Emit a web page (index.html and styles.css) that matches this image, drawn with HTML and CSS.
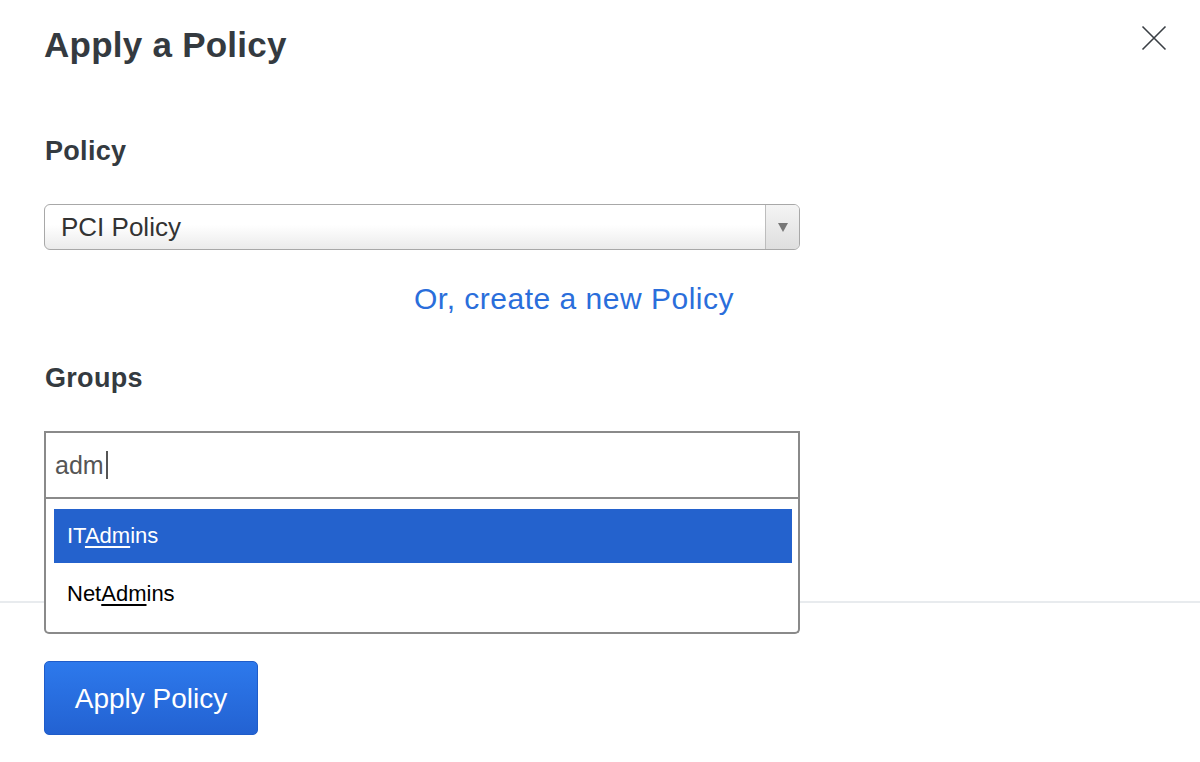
FILE: index.html
```html
<!DOCTYPE html>
<html lang="en">
<head>
<meta charset="utf-8">
<title>Apply a Policy</title>
<link rel="stylesheet" href="styles.css">
</head>
<body>
<div class="modal">
  <div class="modal-header">
    <h1 class="title">Apply a Policy</h1>
    <button class="close" aria-label="Close">
      <svg width="26" height="26" viewBox="0 0 26 26"><path d="M1.5 1.5 L24.5 24.5 M24.5 1.5 L1.5 24.5" stroke="#3a3f44" stroke-width="1.6" fill="none"/></svg>
    </button>
  </div>
  <div class="modal-body">
    <div class="label label-policy">Policy</div>
    <div class="select">
      <span class="select-value">PCI Policy</span>
      <span class="select-arrow"><span class="triangle"></span></span>
    </div>
    <div class="link-row"><a class="link" href="#">Or, create a new Policy</a></div>
    <div class="label label-groups">Groups</div>
    <div class="combo">
      <div class="combo-input"><span class="typed">adm</span><span class="caret"></span></div>
      <ul class="dropdown">
        <li class="option active">IT<u>Adm</u>ins</li>
        <li class="option">Net<u>Adm</u>ins</li>
      </ul>
    </div>
  </div>
  <div class="modal-footer">
    <button class="apply">Apply Policy</button>
  </div>
</div>
</body>
</html>
```
FILE: styles.css
```css
html, body {
  margin: 0;
  padding: 0;
  background: #ffffff;
}
body {
  font-family: "Liberation Sans", Arial, sans-serif;
  color: #343a40;
}
.modal {
  display: flex;
  flex-direction: column;
}
.modal-header {
  display: flex;
  justify-content: space-between;
  align-items: flex-start;
  padding: 25px 33px 0 44px;
}
.title {
  margin: 0;
  font-size: 35px;
  line-height: 40px;
  font-weight: bold;
  color: #343a40;
  letter-spacing: 0.25px;
}
.close {
  margin-top: 0;
  width: 26px;
  height: 26px;
  padding: 0;
  border: 0;
  background: transparent;
  display: flex;
}
.modal-body {
  display: flex;
  flex-direction: column;
  padding: 0 44px;
}
.label {
  font-size: 27px;
  line-height: 30px;
  font-weight: bold;
  color: #343a40;
  letter-spacing: 0.3px;
  padding-left: 1px;
}
.label-policy {
  margin-top: 71px;
}
.select {
  margin-top: 38px;
  width: 756px;
  height: 46px;
  box-sizing: border-box;
  border: 1px solid #a8a8a8;
  border-radius: 6px;
  background: linear-gradient(to bottom, #ffffff 0%, #ffffff 45%, #ebebeb 100%);
  display: flex;
  align-items: stretch;
  overflow: hidden;
}
.select-value {
  flex: 1;
  padding-left: 16px;
  font-size: 26px;
  line-height: 44px;
  color: #333333;
}
.select-arrow {
  width: 33px;
  border-left: 1px solid #bdbdbd;
  background: linear-gradient(to bottom, #f4f4f4 0%, #dedede 100%);
  display: flex;
  align-items: center;
  justify-content: center;
}
.triangle {
  width: 0;
  height: 0;
  border-left: 5px solid transparent;
  border-right: 5px solid transparent;
  border-top: 9px solid #777777;
}
.link-row {
  margin-top: 31px;
  width: 756px;
  box-sizing: border-box;
  padding-right: 66px;
  text-align: right;
  line-height: 36px;
}
.link {
  font-size: 30px;
  color: #2a6edb;
  text-decoration: none;
  letter-spacing: 0.5px;
}
.label-groups {
  margin-top: 41px;
}
.combo {
  position: relative;
  margin-top: 38px;
  width: 756px;
  z-index: 2;
}
.combo-input {
  height: 68px;
  box-sizing: border-box;
  border: 2px solid #8a8a8a;
  padding-left: 9px;
  display: flex;
  align-items: center;
  background: #ffffff;
}
.typed {
  font-size: 25px;
  color: #555555;
  line-height: 30px;
}
.caret {
  width: 2px;
  height: 28px;
  margin-left: 2px;
  background: #555555;
}
.dropdown {
  position: absolute;
  left: 0;
  right: 0;
  top: 100%;
  margin: 0;
  list-style: none;
  box-sizing: border-box;
  height: 135px;
  padding: 10px 6px 9px 8px;
  border: 2px solid #8a8a8a;
  border-top: 0;
  border-radius: 0 0 5px 5px;
  background: #ffffff;
  display: flex;
  flex-direction: column;
  gap: 4px;
}
.option {
  height: 54px;
  line-height: 54px;
  padding-left: 13px;
  font-size: 22px;
  color: #000000;
}
.option u {
  text-decoration-thickness: 2px;
  text-underline-offset: 3px;
}
.option.active {
  background: #2462cd;
  color: #ffffff;
}
.modal-footer {
  margin-top: 102px;
  border-top: 2px solid #e8ebee;
  padding: 58px 44px 0 44px;
}
.apply {
  width: 214px;
  height: 74px;
  border: 1px solid #1f5cc9;
  border-radius: 5px;
  background: linear-gradient(to bottom, #2d79ec 0%, #2362d2 100%);
  color: #ffffff;
  font-family: "Liberation Sans", Arial, sans-serif;
  font-size: 28px;
  padding: 0;
  padding-top: 2px;
}
```
